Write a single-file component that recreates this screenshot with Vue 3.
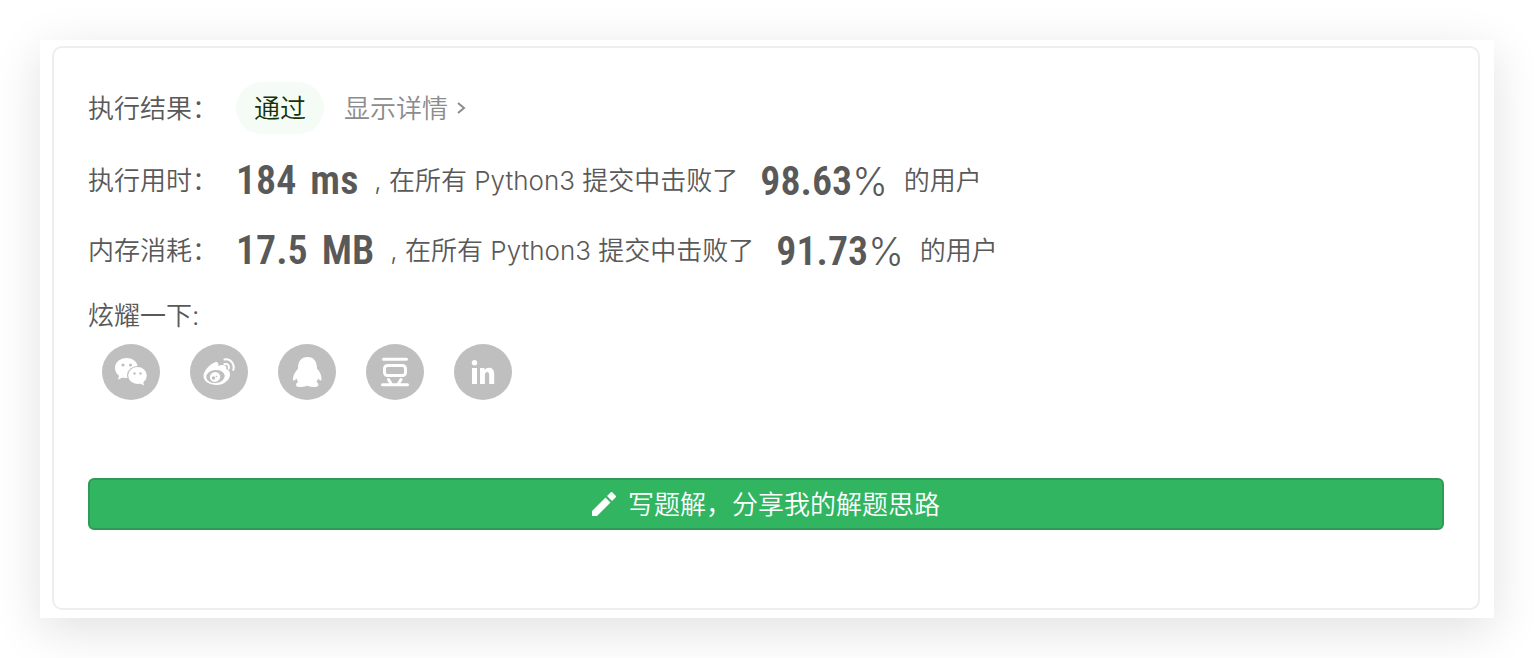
<script setup>
import { ref } from 'vue'

const stats = ref([
  { label: '执行用时：', value: '184', unit: 'ms', percent: '98.63' },
  { label: '内存消耗：', value: '17.5', unit: 'MB', percent: '91.73' },
])
</script>

<template>
  <main class="card">
    <section class="result">
      <div class="row status-row">
        <span class="label">执行结果：</span>
        <span class="status">通过</span>
        <a href="#" class="detail">
          <span>显示详情</span>
          <svg class="arrow" viewBox="0 0 10 14">
            <path d="M2 2l6 5-6 5" />
          </svg>
        </a>
      </div>

      <div v-for="item in stats" :key="item.label" class="row stat-row">
        <span class="label">{{ item.label }}</span>
        <span class="number value">
          <span>{{ item.value }}</span>
          <span>{{ item.unit }}</span>
        </span>
        <span class="text">, 在所有 Python3 提交中击败了</span>
        <span class="number">{{ item.percent }}<span class="percent">%</span></span>
        <span>的用户</span>
      </div>

      <div class="share-title">炫耀一下:</div>
      <div class="share">
        <button class="share-button" aria-label="微信">
          <svg viewBox="0 0 58 56">
            <path class="fill" d="M24.500 14c-6.300 0-11.500 4.300-11.500 10 0 3.200 1.600 5.900 4 7.700l-1 4 4.500-2.300c1.300.4 2.600.6 4 .6 1.400 0 2-.1 2.500-.2l8.500-12c-1-4.700-5.200-7.800-11-7.800z" />
            <ellipse class="hole" cx="35.500" cy="31.500" rx="10.500" ry="9.500" />
            <ellipse class="fill" cx="35.500" cy="31.500" rx="9.300" ry="8.500" />
            <path class="fill" d="M37 39l5 2.500-1-5z" />
            <circle class="hole" cx="21" cy="21" r="1.600" />
            <circle class="hole" cx="28.500" cy="21" r="1.600" />
            <circle class="hole" cx="32.500" cy="29.500" r="1.200" />
            <circle class="hole" cx="38.500" cy="29.500" r="1.200" />
          </svg>
        </button>
        <button class="share-button" aria-label="微博">
          <svg viewBox="0 0 58 56">
            <path class="fill" d="M24.500 18.500c3-1.500 4.500 1 3.700 3.500 4-1.500 9-1.500 8 3 2.500 1 3.800 2.500 3.800 5.500 0 5.500-6.300 10.500-13.500 10.500-7 0-13-3.500-13-9 0-4.500 5.700-11.500 11-13.500z" />
            <ellipse class="hole" cx="25.500" cy="32.500" rx="9.300" ry="6.500" transform="rotate(-6 25.500 32.500)" />
            <ellipse class="fill" cx="25" cy="33" rx="5.200" ry="4.900" transform="rotate(-20 25 33)" />
            <circle class="hole" cx="23.500" cy="34" r="1.700" />
            <circle class="hole" cx="26.500" cy="32.500" r=".8" />
            <path class="line thin" d="M34.500 15.500c6-1 10.500 4.500 8.800 10.500M34.500 20c3.500-.6 5 1.500 4.300 4.500" />
          </svg>
        </button>
        <button class="share-button" aria-label="QQ">
          <svg viewBox="0 0 58 56">
            <path class="fill" d="M29.500 13c-6.500 0-9.500 4.500-9.500 11.500-2.500 3-5 7-5 10.500 0 2 .8 2.500 3.500-.5.5 1.500 1 2.500 1.800 3.500-3 1.300-3.300 5 1 5 3 0 6-.5 8-1.300 2 .8 5 1.300 8 1.300 4 0 4-4 1-5 .8-1 1.400-2 1.800-3.500 2.400 2.800 3.400 2.500 3.400.5 0-3.500-1.500-7.500-4.500-10.500 0-7-3-11.500-9.500-11.500z" />
          </svg>
        </button>
        <button class="share-button" aria-label="豆瓣">
          <svg viewBox="0 0 58 56">
            <path class="line" d="M17.500 15.300h23M16.500 40.700h25M22.500 35.500l2.500 4M35 35.500l-2.500 4" />
            <rect class="line" x="18.500" y="21.500" width="21" height="10" rx="3" />
          </svg>
        </button>
        <button class="share-button" aria-label="LinkedIn">
          <svg viewBox="0 0 58 56">
            <circle class="fill" cx="20.500" cy="18.700" r="2.700" />
            <path class="fill" d="M18 24h5v16h-5zM26 24h4.500v2c3-3.700 9.700-3.200 9.700 4v10h-5v-9c0-4-4.300-3.800-4.300 0v9H26z" />
          </svg>
        </button>
      </div>

      <button class="write">
        <svg class="pencil" viewBox="0 0 24 24">
          <path d="M0 19v5h5L18.500 10.500l-5-5zM15 4l5 5 3.500-3.500c.7-.7.7-1.300 0-2L20.500.5c-.7-.7-1.300-.7-2 0z" />
        </svg>
        <span>写题解，分享我的解题思路</span>
      </button>
    </section>
  </main>
</template>

<style>
body {
  margin: 0;
  background-color: #fff;
}
</style>

<style scoped>
.card {
  margin: 40px;
  padding: 6px 14px 8px 12px;
  background-color: #fff;
  box-shadow: 0 12px 46px rgba(0, 0, 0, 0.12);
  font-family: Inter, 'Noto Sans CJK SC', sans-serif;
  font-size: 26px;
  font-weight: 350;
  line-height: 40px;
  color: #595959;
}

.result {
  padding: 34px 34px 78px;
  border: 2px solid #eee;
  border-radius: 10px;
}

.row {
  display: flex;
  align-items: center;
  white-space: nowrap;
}

.status-row {
  height: 52px;
  margin-bottom: 12px;
}

.stat-row {
  height: 70px;
}

.label {
  width: 148px;
}

.status {
  padding: 2px 18px 0;
  line-height: 50px;
  border-radius: 26px;
  background-color: #f5fbf5;
  color: #143306;
}

.detail {
  display: flex;
  align-items: center;
  gap: 8px;
  margin-left: 20px;
  color: #8c8c8c;
  text-decoration: none;
}

.status-row .label,
.detail span,
.write span {
  padding-top: 2px;
}

.arrow {
  width: 10px;
  height: 14px;
  fill: none;
  stroke: #8c8c8c;
  stroke-width: 2;
}

.number {
  margin-right: 16px;
  font-family: 'Roboto Condensed', 'Noto Sans CJK SC', sans-serif;
  font-size: 40px;
  font-weight: 600;
}

.value {
  display: flex;
  gap: 14px;
}

.text {
  margin-right: 22px;
}

.percent {
  font-family: Inter, sans-serif;
  font-size: 38px;
  font-weight: 300;
}

.share-title {
  margin-top: 10px;
}

.share {
  display: flex;
  gap: 30px;
  margin: 8px 14px 78px;
}

.share-button {
  width: 58px;
  height: 56px;
  padding: 0;
  border: none;
  border-radius: 50%;
  background-color: #bfbfbf;
  cursor: pointer;
}

.share-button svg {
  display: block;
}

.fill {
  fill: #fff;
}

.hole {
  fill: #bfbfbf;
}

.line {
  fill: none;
  stroke: #fff;
  stroke-width: 3;
  stroke-linecap: round;
}

.thin {
  stroke-width: 2;
}

.write {
  display: flex;
  align-items: center;
  justify-content: center;
  gap: 12px;
  width: 100%;
  height: 52px;
  padding: 0;
  border: 2px solid #2f9b56;
  border-radius: 6px;
  background-color: #32b561;
  color: #fff;
  font: inherit;
  cursor: pointer;
}

.write:hover {
  background-color: #2ca657;
}

.pencil {
  width: 24px;
  height: 24px;
  fill: #fff;
}
</style>
